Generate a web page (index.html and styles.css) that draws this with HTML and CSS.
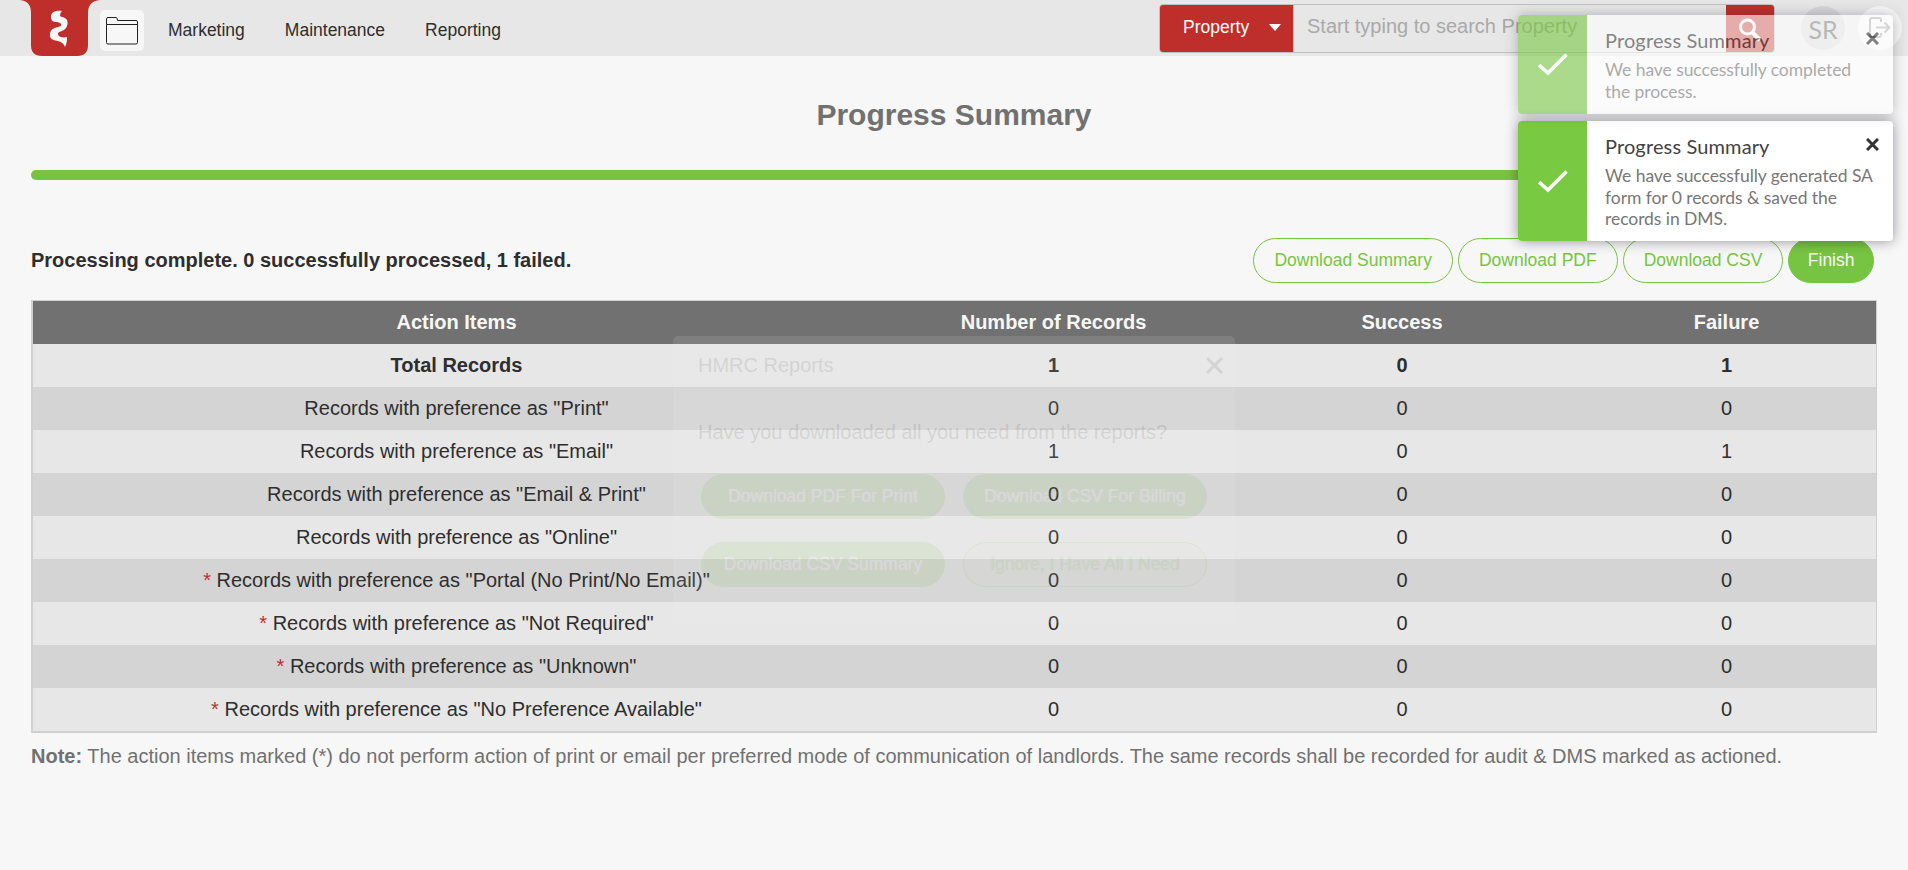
FILE: index.html
```html
<!DOCTYPE html>
<html lang="en">
<head>
<meta charset="utf-8">
<title>Progress Summary</title>
<link rel="stylesheet" href="styles.css">
</head>
<body>
<header class="topbar">
  <svg class="logo" width="80" height="56" viewBox="0 0 80 56">
    <path fill="#be2f2c" d="M0 0H80Q68 1 68 13V45Q68 56 57 56H22Q11 56 11 45V13Q11 1 0 0Z"/>
    <path fill="#f7f7f7" d="M42 11C35 10 31 12 31 17C31 21 33 22 37 22C42 23 43 26 38 27C32 28 29.500 31 30 36C31 43 42 38 45 47C47 43 47 40 47 37C43 38 38 37 38 34C38 31 43 32 46 28C49 23 48 18 42 17C39 17 40 13 42 11Z"/>
  </svg>
  <a class="folder">
    <svg width="32" height="28" viewBox="0 0 32 28" fill="none" stroke="#222"><path d="M.5 7.500V2Q.5.500 2 .500H10Q11.500.500 11.500 3.500H30Q31.500 3.500 31.500 5V25.500Q31.500 27 30 27H2Q.5 27 .5 25.500V7.500H31.500"/></svg>
  </a>
  <nav class="nav"><a>Marketing</a><a>Maintenance</a><a>Reporting</a></nav>
  <div class="search">
    <div class="search-type">Property<span class="caret"></span></div>
    <div class="search-input">Start typing to search Property</div>
    <div class="search-btn"><svg width="24" height="24" viewBox="0 0 24 24" fill="none" stroke="#fff"><circle cx="9.500" cy="9" r="7" stroke-width="3"/><path d="M14.500 14.500L22 22" stroke-width="4"/></svg></div>
  </div>
  <div class="avatar">SR</div>
  <div class="logout"><svg width="22" height="22" viewBox="0 0 22 22" fill="none" stroke="#999" stroke-width="2"><path d="M12 5V3Q12 1 10 1H3Q1 1 1 3V18Q1 20 3 20H10Q12 20 12 18V16M7 10.500H20M15.500 5.500L20.500 10.500L15.500 15.500"/></svg></div>
</header>
<main class="page">
  <h1 class="title">Progress Summary</h1>
  <div class="progress"></div>
  <div class="actions">
    <p class="status">Processing complete. 0 successfully processed, 1 failed.</p>
    <div class="buttons"><a class="btn">Download Summary</a><a class="btn">Download PDF</a><a class="btn">Download CSV</a><a class="btn solid">Finish</a></div>
  </div>
  <table class="records">
    <colgroup><col class="c1"><col class="c2"><col class="c3"><col class="c4"></colgroup>
    <thead><tr><th>Action Items</th><th>Number of Records</th><th>Success</th><th>Failure</th></tr></thead>
    <tbody>
      <tr class="total"><td>Total Records</td><td>1</td><td>0</td><td>1</td></tr>
      <tr><td>Records with preference as "Print"</td><td>0</td><td>0</td><td>0</td></tr>
      <tr><td>Records with preference as "Email"</td><td>1</td><td>0</td><td>1</td></tr>
      <tr><td>Records with preference as "Email &amp; Print"</td><td>0</td><td>0</td><td>0</td></tr>
      <tr><td>Records with preference as "Online"</td><td>0</td><td>0</td><td>0</td></tr>
      <tr><td><i class="star">*</i> Records with preference as "Portal (No Print/No Email)"</td><td>0</td><td>0</td><td>0</td></tr>
      <tr><td><i class="star">*</i> Records with preference as "Not Required"</td><td>0</td><td>0</td><td>0</td></tr>
      <tr><td><i class="star">*</i> Records with preference as "Unknown"</td><td>0</td><td>0</td><td>0</td></tr>
      <tr><td><i class="star">*</i> Records with preference as "No Preference Available"</td><td>0</td><td>0</td><td>0</td></tr>
    </tbody>
  </table>
  <p class="note"><b>Note:</b> The action items marked (*) do not perform action of print or email per preferred mode of communication of landlords. The same records shall be recorded for audit &amp; DMS marked as actioned.</p>
</main>
<div class="modal">
  <div class="modal-head"><span>HMRC Reports</span><svg width="17" height="17" viewBox="0 0 17 17" stroke="#333" stroke-width="3"><path d="M1 1L16 16M16 1L1 16"/></svg></div>
  <p class="question">Have you downloaded all you need from the reports?</p>
  <div class="modal-grid"><a>Download PDF For Print</a><a>Download CSV For Billing</a><a>Download CSV Summary</a><a class="ghost">Ignore, I Have All I Need</a></div>
</div>
<div class="toasts">
  <section class="toast fading">
    <div class="toast-icon"><svg width="30" height="23" viewBox="0 0 30 23" fill="none" stroke="#fff" stroke-width="3.500"><path d="M1 12L10 20L28.500 1.500"/></svg></div>
    <div class="toast-body"><h2>Progress Summary</h2><p>We have successfully completed<br>the process.</p></div>
    <svg class="toast-close" width="13" height="13" viewBox="0 0 13 13" stroke="#333" stroke-width="3"><path d="M1 1L12 12M12 1L1 12"/></svg>
  </section>
  <section class="toast">
    <div class="toast-icon"><svg width="30" height="23" viewBox="0 0 30 23" fill="none" stroke="#fff" stroke-width="3.500"><path d="M1 12L10 20L28.500 1.500"/></svg></div>
    <div class="toast-body"><h2>Progress Summary</h2><p>We have successfully generated SA<br>form for 0 records &amp; saved the<br>records in DMS.</p></div>
    <svg class="toast-close" width="13" height="13" viewBox="0 0 13 13" stroke="#333" stroke-width="3"><path d="M1 1L12 12M12 1L1 12"/></svg>
  </section>
</div>
</body>
</html>
```
FILE: styles.css
```css
* { box-sizing: border-box; }
body { margin: 0; height: 870px; overflow: hidden; background: #f7f7f7; color: #2e2e2e; font: 20px "Liberation Sans", Arial, sans-serif; }
h1, h2, p { margin: 0; }
.topbar { display: flex; height: 56px; background: #e7e7e7; padding-left: 20px; }
.logo { flex: none; }
.folder { display: flex; align-items: center; justify-content: center; width: 44px; height: 41px; margin-top: 10px; background: #f7f7f7; border-radius: 5px; }
.nav { display: flex; gap: 40px; margin-left: 24px; font-size: 17.5px; line-height: 60px; }
.search { display: flex; width: 616px; height: 49px; margin: 4px 0 0 auto; border: 1px solid #c0c0c0; border-radius: 4px; overflow: hidden; }
.search-type { display: flex; align-items: center; width: 134px; padding: 0 0 3px 23px; background: #be2f2c; color: #fff; font-size: 17.5px; line-height: 44px; border-right: 1px solid #c0c0c0; }
.caret { margin-left: 20px; border: 6px solid transparent; border-top: 7px solid #fff; border-bottom: 0; }
.search-input { flex: 1; padding-left: 13px; color: #a9a9a9; line-height: 43px; }
.search-btn { width: 48px; padding: 13px 0 0 12px; background: #be2f2c; }
.avatar, .logout { width: 44px; height: 44px; margin-top: 6px; border-radius: 50%; text-align: center; }
.avatar { margin-left: 26px; background: #d6d6d6; color: #4c4c4c; font: 25px/46px Lato, sans-serif; }
.logout { margin: 6px 6px 0 13px; background: #f7f7f7; padding-top: 11px; }
.page { padding: 0 31px 0 31px; }
.title { padding-top: 42px; color: #717171; font-size: 30px; line-height: 33px; text-align: center; }
.progress { height: 10px; margin-top: 39px; border-radius: 5px; background: #77c442; }
.actions { display: flex; justify-content: space-between; margin-top: 58px; height: 45px; }
.status { font-weight: bold; line-height: 45px; }
.buttons { display: flex; gap: 5px; padding-right: 3px; }
.btn { padding: 0 20px; border: 1px solid #77c442; border-radius: 23px; color: #77c442; font-size: 17.5px; line-height: 43px; }
.btn.solid { padding: 0 18.5px; background: #77c442; color: #f7f7f7; }
.records { width: 1846px; margin-top: 17px; table-layout: fixed; border-collapse: separate; border-spacing: 0; border: 1px solid #cfd0d0; border-width: 1px 1px 2px 2px; text-align: center; }
.c1 { width: 847px; }
.c2 { width: 347px; }
.c3 { width: 350px; }
.records th, .records td { height: 43px; padding: 0; line-height: 23px; }
.records th { background: #717171; color: #f7f7f7; }
.records tr { background: #e7e7e7; }
.records tbody tr:nth-child(even) { background: #d4d4d4; }
.total { font-weight: bold; }
.star { color: #be2f2c; font-style: normal; }
.note { margin-top: 11px; color: #717171; line-height: 24px; white-space: nowrap; }
.modal { position: absolute; left: 673px; top: 336px; width: 562px; height: 287px; background: #f7f7f7; border-radius: 5px; opacity: .1; }
.modal-head { display: flex; justify-content: space-between; align-items: center; height: 59px; padding: 0 12px 0 25px; border-bottom: 1px solid #eee; }
.question { padding-left: 25px; line-height: 74px; }
.modal-grid { display: grid; grid-template-columns: 244px 244px; gap: 23px 18px; margin: 5px 0 0 28px; }
.modal-grid a { height: 45px; border: 1px solid #77c442; border-radius: 23px; background: #77c442; color: #fff; font-size: 17.5px; line-height: 42px; text-align: center; text-shadow: 0 0 1px #fff; }
.modal-grid .ghost { background: #e7e7df; color: #77c442; text-shadow: 0 0 1px #77c442; }
.toasts { position: absolute; left: 1518px; top: 15px; display: grid; grid-template-columns: 375px; gap: 7px; }
.toast { display: flex; height: 120px; background: #fff; border-radius: 4px; box-shadow: 0 0 13px rgba(20, 20, 40, .45); font-family: Lato, sans-serif; padding-right: 14px; }
.toast-icon { display: flex; flex: none; align-items: center; justify-content: center; width: 69px; background: #7ac943; border-radius: 4px 0 0 4px; }
.toast-body { flex: 1; min-width: 0; padding: 13px 0 0 18px; white-space: nowrap; }
.toast-body h2 { color: #424242; font-size: 20px; font-weight: 400; line-height: 24px; letter-spacing: .13px; }
.toast-body p { margin-top: 7px; color: #777; font-size: 17.5px; line-height: 21.5px; letter-spacing: -.06px; }
.toast-close { flex: none; margin-top: 17px; }
.toast.fading { height: 99px; opacity: .6; }
```
